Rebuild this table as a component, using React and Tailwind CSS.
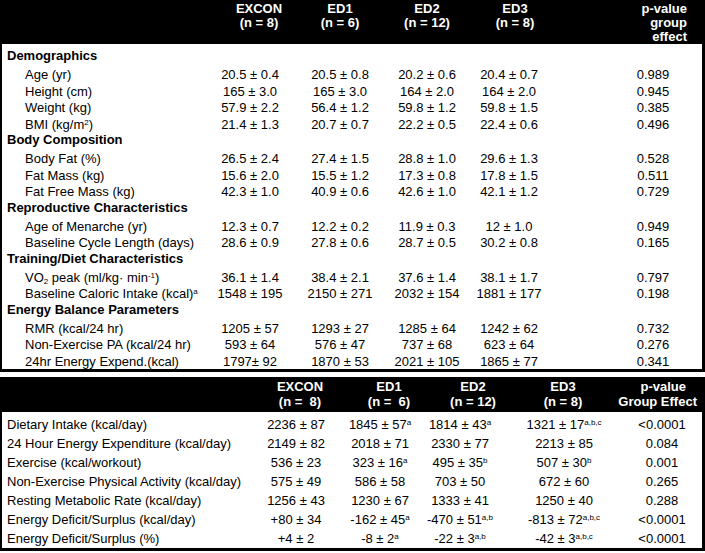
import React from 'react';

const topSections = [
  {
    title: 'Demographics',
    rows: [
      ['Age (yr)', '20.5 ± 0.4', '20.5 ± 0.8', '20.2 ± 0.6', '20.4 ± 0.7', '0.989'],
      ['Height (cm)', '165 ± 3.0', '165 ± 3.0', '164 ± 2.0', '164 ± 2.0', '0.945'],
      ['Weight (kg)', '57.9 ± 2.2', '56.4 ± 1.2', '59.8 ± 1.2', '59.8 ± 1.5', '0.385'],
      [<>BMI (kg/m<sup className="text-[8px]">2</sup>)</>, '21.4 ± 1.3', '20.7 ± 0.7', '22.2 ± 0.5', '22.4 ± 0.6', '0.496'],
    ],
  },
  {
    title: 'Body Composition',
    rows: [
      ['Body Fat (%)', '26.5 ± 2.4', '27.4 ± 1.5', '28.8 ± 1.0', '29.6 ± 1.3', '0.528'],
      ['Fat Mass (kg)', '15.6 ± 2.0', '15.5 ± 1.2', '17.3 ± 0.8', '17.8 ± 1.5', '0.511'],
      ['Fat Free Mass (kg)', '42.3 ± 1.0', '40.9 ± 0.6', '42.6 ± 1.0', '42.1 ± 1.2', '0.729'],
    ],
  },
  {
    title: 'Reproductive Characteristics',
    rows: [
      ['Age of Menarche (yr)', '12.3 ± 0.7', '12.2 ± 0.2', '11.9 ± 0.3', '12 ± 1.0', '0.949'],
      ['Baseline Cycle Length (days)', '28.6 ± 0.9', '27.8 ± 0.6', '28.7 ± 0.5', '30.2 ± 0.8', '0.165'],
    ],
  },
  {
    title: 'Training/Diet Characteristics',
    rows: [
      [<>VO<sub className="text-[8px]">2</sub> peak (ml/kg· min<sup className="text-[8px]">-1</sup>)</>, '36.1 ± 1.4', '38.4 ± 2.1', '37.6 ± 1.4', '38.1 ± 1.7', '0.797'],
      [<>Baseline Caloric Intake (kcal)<sup className="text-[8px]">a</sup></>, '1548 ± 195', '2150 ± 271', '2032 ± 154', '1881 ± 177', '0.198'],
    ],
  },
  {
    title: 'Energy Balance Parameters',
    rows: [
      ['RMR (kcal/24 hr)', '1205 ± 57', '1293 ± 27', '1285 ± 64', '1242 ± 62', '0.732'],
      ['Non-Exercise PA (kcal/24 hr)', '593 ± 64', '576 ± 47', '737 ± 68', '623 ± 64', '0.276'],
      ['24hr Energy Expend.(kcal)', '1797± 92', '1870 ± 53', '2021 ± 105', '1865 ± 77', '0.341'],
    ],
  },
];

const bottomRows = [
  ['Dietary Intake (kcal/day)', '2236 ± 87', '1845 ± 57^a', '1814 ± 43^a', '1321 ± 17^a,b,c', '<0.0001'],
  ['24 Hour Energy Expenditure (kcal/day)', '2149 ± 82', '2018 ± 71', '2330 ± 77', '2213 ± 85', '0.084'],
  ['Exercise (kcal/workout)', '536 ± 23', '323 ± 16^a', '495 ± 35^b', '507 ± 30^b', '0.001'],
  ['Non-Exercise Physical Activity (kcal/day)', '575 ± 49', '586 ± 58', '703 ± 50', '672 ± 60', '0.265'],
  ['Resting Metabolic Rate (kcal/day)', '1256 ± 43', '1230 ± 67', '1333 ± 41', '1250 ± 40', '0.288'],
  ['Energy Deficit/Surplus (kcal/day)', '+80 ± 34', '-162 ± 45^a', '-470 ± 51^a,b', '-813 ± 72^a,b,c', '<0.0001'],
  ['Energy Deficit/Surplus (%)', '+4 ± 2', '-8 ± 2^a', '-22 ± 3^a,b', '-42 ± 3^a,b,c', '<0.0001'],
];

// "1845 ± 57^a" -> value with superscript note
const Val = ({ text }) => {
  const [main, note] = text.split('^');
  return (
    <span className="whitespace-pre">
      {main}
      {note && <sup className="text-[8px]">{note}</sup>}
    </span>
  );
};

const TopTable = () => (
  <div>
    {/* header */}
    <div className="grid h-[44px] grid-cols-[210px_98px_64px_110px_66px_1fr] bg-black pt-[2px] text-[13px] font-bold leading-[14px] text-white">
      <div />
      <div className="text-center">EXCON<br />(n = 8)</div>
      <div className="text-center">ED1<br />(n = 6)</div>
      <div className="text-center">ED2<br />(n = 12)</div>
      <div className="text-center">ED3<br />(n = 8)</div>
      <div className="pr-[18px] text-right">p-value<br />group<br />effect</div>
    </div>

    {/* body */}
    <div className="border-b-[3px] border-l-2 border-r-[3px] border-black pb-[1px] pt-[3px] text-[13px] text-black">
      {topSections.map((sec) => (
        <div key={sec.title}>
          <div className="flex h-[18px] items-center pl-[5px] font-bold">{sec.title}</div>
          {sec.rows.map((r, i) => (
            <div key={i} className="grid h-[16.5px] grid-cols-[203px_90px_90px_84px_80px_66px_76px] items-center">
              <div className="whitespace-nowrap pl-[23px]">{r[0]}</div>
              <div className="text-center"><Val text={r[1]} /></div>
              <div className="text-center"><Val text={r[2]} /></div>
              <div className="text-center"><Val text={r[3]} /></div>
              <div className="text-center"><Val text={r[4]} /></div>
              <div />
              <div className="text-center">{r[5]}</div>
            </div>
          ))}
        </div>
      ))}
    </div>
  </div>
);

const BottomTable = () => (
  <div className="mt-[5px]">
    <div className="grid h-[35px] grid-cols-[250px_100px_78px_90px_90px_89px] bg-black pt-[2px] text-[13px] font-bold leading-[15px] text-white">
      <div />
      <div className="whitespace-pre text-center">EXCON<br />(n =  8)</div>
      <div className="whitespace-pre text-center">ED1<br />(n =  6)</div>
      <div className="text-center">ED2<br />(n = 12)</div>
      <div className="text-center">ED3<br />(n = 8)</div>
      <div className="text-right">
        <div className="pr-[11px]">p-value</div>
        <div>Group Effect</div>
      </div>
    </div>

    <div className="border-b-[3px] border-l-2 border-r-[3px] border-black pt-[3px] text-[13px] text-black">
      {bottomRows.map((r, i) => (
        <div key={i} className="grid h-[19px] grid-cols-[244px_100px_68px_92px_116px_80px] items-center">
          <div className="whitespace-nowrap pl-[5px]">{r[0]}</div>
          <div className="text-center"><Val text={r[1]} /></div>
          <div className="text-center"><Val text={r[2]} /></div>
          <div className="text-center"><Val text={r[3]} /></div>
          <div className="text-center"><Val text={r[4]} /></div>
          <div className="text-center">{r[5]}</div>
        </div>
      ))}
    </div>
  </div>
);

export default function App() {
  return (
    <div className="w-[705px] bg-white font-['Liberation_Sans',Arial,sans-serif]">
      <TopTable />
      <BottomTable />
    </div>
  );
}
